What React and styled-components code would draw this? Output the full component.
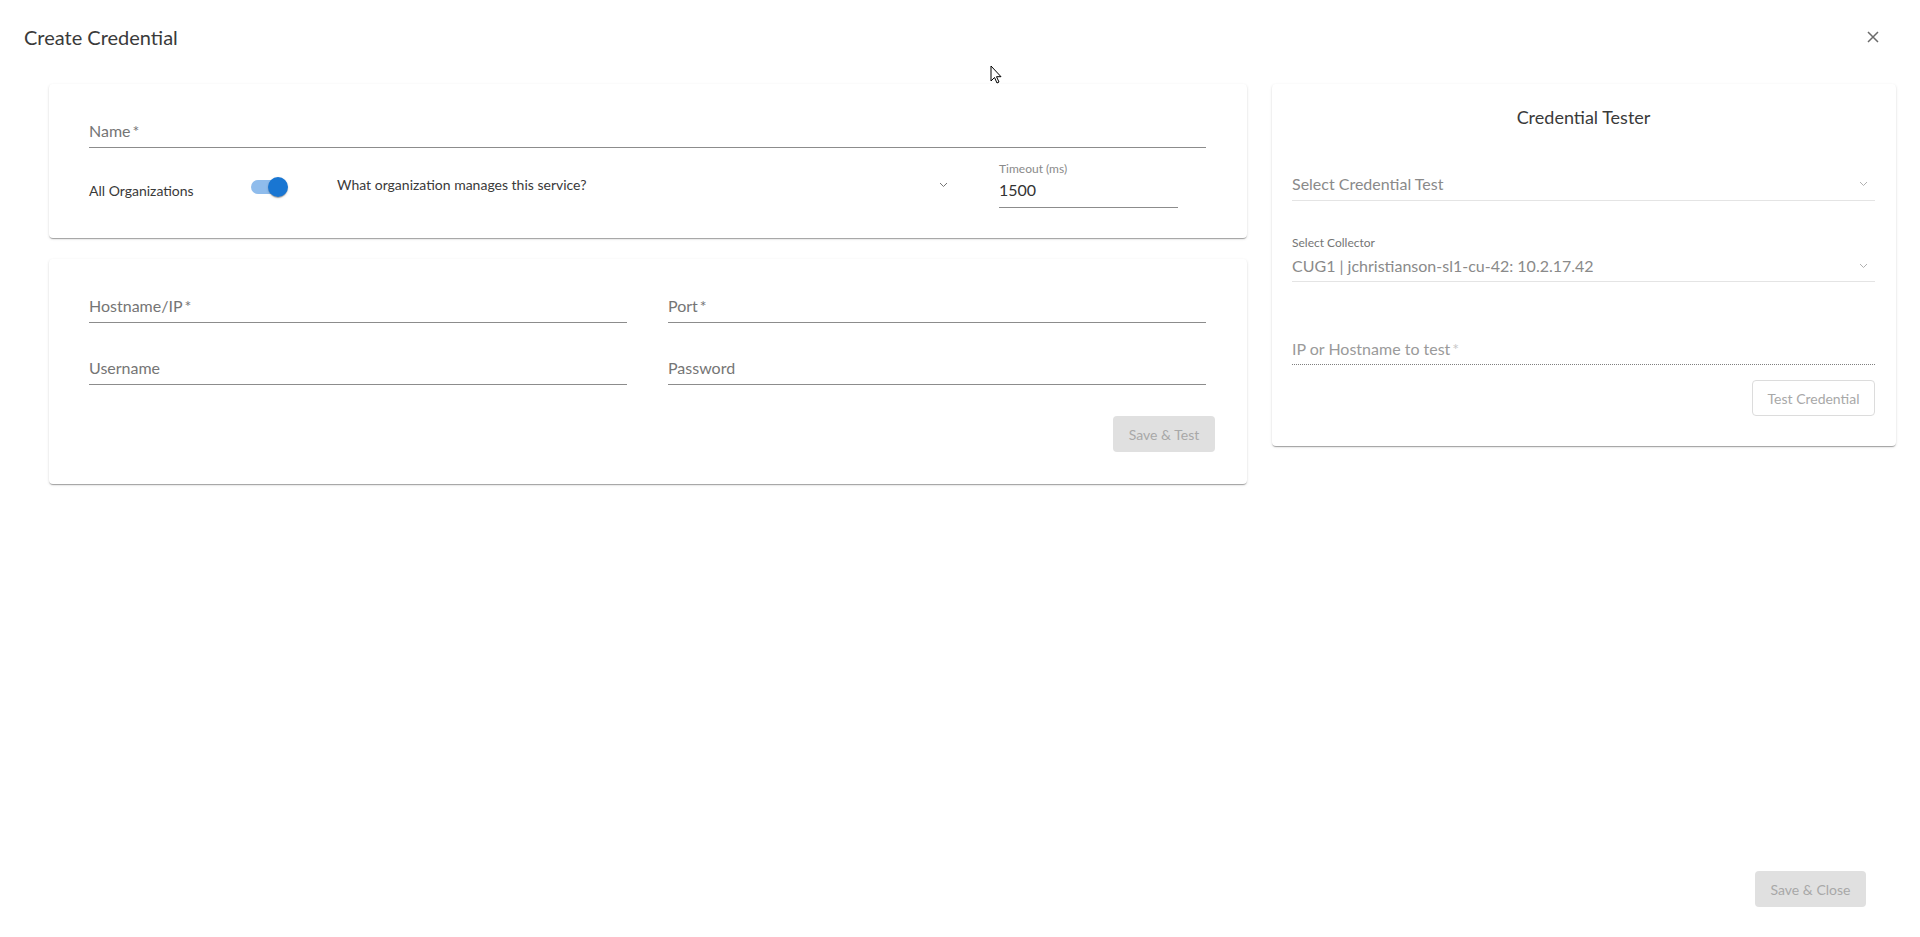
import React from 'react';
import styled, { createGlobalStyle } from 'styled-components';

const GlobalStyle = createGlobalStyle`
  html, body {
    margin: 0;
    padding: 0;
    background: #ffffff;
    font-family: Lato, "Noto Sans", sans-serif;
    color: #333333;
  }
  * {
    box-sizing: border-box;
  }
`;

const Page = styled.div`
  position: relative;
  display: flex;
  flex-direction: column;
  height: 100vh;
  min-height: 937px;
  background: #fff;
`;

const Header = styled.header`
  display: flex;
  align-items: center;
  justify-content: space-between;
  height: 74px;
  padding: 0 40px 0 24px;
`;

const Title = styled.h1`
  margin: 0;
  font-size: 20px;
  font-weight: 400;
  color: #3a3a3a;
`;

const CloseButton = styled.button`
  display: flex;
  align-items: center;
  justify-content: center;
  width: 14px;
  height: 14px;
  padding: 0;
  border: none;
  background: none;
  cursor: pointer;
`;

const Content = styled.main`
  flex: 1;
  display: grid;
  grid-template-columns: 1fr 624px;
  column-gap: 25px;
  align-items: start;
  padding: 10px 24px 0 49px;
`;

const Column = styled.div`
  display: flex;
  flex-direction: column;
  gap: 21px;
`;

const Card = styled.section`
  background: #fff;
  border-radius: 4px;
  box-shadow: 0 2px 1px -1px rgba(0, 0, 0, 0.2), 0 1px 1px 0 rgba(0, 0, 0, 0.14),
    0 1px 3px 0 rgba(0, 0, 0, 0.12);
  padding: ${(p) => p.$pad};
`;

const Field = styled.div`
  display: flex;
  flex-direction: column;
  width: ${(p) => p.$width || 'auto'};
  margin-top: ${(p) => p.$top || '0'};
  padding-bottom: ${(p) => p.$bottom || '4px'};
  border-bottom: 1px ${(p) => (p.$dotted ? 'dotted' : 'solid')} ${(p) => p.$line || 'rgba(0, 0, 0, 0.45)'};
`;

const SmallLabel = styled.span`
  font-size: 12px;
  line-height: 16px;
  color: ${(p) => p.$color || '#757575'};
  margin-bottom: ${(p) => p.$gap || '1px'};
`;

const FieldText = styled.span`
  font-size: 16px;
  line-height: 24px;
  color: ${(p) => p.$color || '#757575'};
  white-space: nowrap;
`;

const Star = styled.span`
  color: ${(p) => p.$color || 'inherit'};
  margin-left: 2px;
`;

const SelectRow = styled.div`
  display: flex;
  align-items: center;
  justify-content: space-between;
  padding-right: 7px;
`;

const OrgRow = styled.div`
  display: flex;
  align-items: center;
  margin-top: 13px;
`;

const OrgLabel = styled.span`
  width: 162px;
  margin-top: 12px;
  font-size: 14px;
  color: #3a3a3a;
`;

const Toggle = styled.span`
  position: relative;
  display: inline-block;
  width: 34px;
  height: 14px;
  margin-top: 4px;
  border-radius: 7px;
  background: #8fbcec;

  &::after {
    content: '';
    position: absolute;
    right: -3px;
    top: -3px;
    width: 20px;
    height: 20px;
    border-radius: 50%;
    background: #1976d2;
    box-shadow: 0 2px 1px -1px rgba(0, 0, 0, 0.2), 0 1px 1px 0 rgba(0, 0, 0, 0.14),
      0 1px 3px 0 rgba(0, 0, 0, 0.12);
  }
`;

const OrgSelect = styled.div`
  display: flex;
  align-items: center;
  justify-content: space-between;
  width: 618px;
  margin-left: 52px;
  padding-right: 7px;
  font-size: 14px;
  color: #3a3a3a;
`;

const TimeoutWrap = styled.div`
  margin-left: 44px;
`;

const FieldGrid = styled.div`
  display: grid;
  grid-template-columns: 1fr 1fr;
  column-gap: 41px;
  row-gap: 33px;
  margin-right: 9px;
`;

const Actions = styled.div`
  display: flex;
  justify-content: flex-end;
  margin: ${(p) => p.$margin};
`;

const FilledButton = styled.button`
  width: ${(p) => p.$width};
  height: 36px;
  border: none;
  border-radius: 4px;
  background: #e0e0e0;
  color: #a8a8a8;
  font-family: Lato, sans-serif;
  font-size: 14px;
`;

const OutlineButton = styled.button`
  width: 123px;
  height: 36px;
  border: 1px solid #dcdcdc;
  border-radius: 4px;
  background: #fff;
  color: #a8a8a8;
  font-family: Lato, sans-serif;
  font-size: 14px;
`;

const TesterTitle = styled.h2`
  margin: 0;
  text-align: center;
  font-size: 18px;
  line-height: 24px;
  font-weight: 400;
  color: #3a3a3a;
`;

const Footer = styled.footer`
  display: flex;
  justify-content: flex-end;
  padding: 0 54px 30px 0;
`;

const Pointer = styled.svg`
  position: absolute;
  left: 990px;
  top: 65px;
`;

const Chevron = ({ color = '#757575' }) => (
  <svg width="9" height="6" viewBox="0 0 9 6">
    <path d="M1 1l3.5 3.5L8 1" fill="none" stroke={color} strokeWidth="1" />
  </svg>
);

export default function App() {
  return (
    <Page>
      <GlobalStyle />
      <Header>
        <Title>Create Credential</Title>
        <CloseButton aria-label="close">
          <svg width="12" height="12" viewBox="0 0 12 12">
            <path d="M1 1l10 10M11 1L1 11" stroke="#6b6b6b" strokeWidth="1.5" />
          </svg>
        </CloseButton>
      </Header>

      <Content>
        <Column>
          <Card $pad="35px 41px 30px 40px">
            <Field>
              <FieldText>
                Name<Star>*</Star>
              </FieldText>
            </Field>
            <OrgRow>
              <OrgLabel>All Organizations</OrgLabel>
              <Toggle />
              <OrgSelect>
                <span>What organization manages this service?</span>
                <Chevron />
              </OrgSelect>
              <TimeoutWrap>
                <Field $width="179px" $bottom="5px">
                  <SmallLabel $color="#8a8a8a">Timeout (ms)</SmallLabel>
                  <FieldText $color="#333">1500</FieldText>
                </Field>
              </TimeoutWrap>
            </OrgRow>
          </Card>

          <Card $pad="35px 32px 32px 40px">
            <FieldGrid>
              <Field>
                <FieldText>
                  Hostname/IP<Star>*</Star>
                </FieldText>
              </Field>
              <Field>
                <FieldText>
                  Port<Star>*</Star>
                </FieldText>
              </Field>
              <Field>
                <FieldText>Username</FieldText>
              </Field>
              <Field>
                <FieldText>Password</FieldText>
              </Field>
            </FieldGrid>
            <Actions $margin="31px 0 0">
              <FilledButton $width="102px">Save &amp; Test</FilledButton>
            </Actions>
          </Card>
        </Column>

        <Card $pad="21px 21px 30px 20px">
          <TesterTitle>Credential Tester</TesterTitle>
          <Field $top="43px" $line="#e4e4e4">
            <SelectRow>
              <FieldText $color="#8a8a8a">Select Credential Test</FieldText>
              <Chevron color="#b0b0b0" />
            </SelectRow>
          </Field>
          <Field $top="34px" $line="#e4e4e4" $bottom="3px">
            <SmallLabel $gap="3px">Select Collector</SmallLabel>
            <SelectRow>
              <FieldText $color="#8a8a8a">CUG1 | jchristianson-sl1-cu-42: 10.2.17.42</FieldText>
              <Chevron color="#b0b0b0" />
            </SelectRow>
          </Field>
          <Field $top="55px" $dotted $line="rgba(0, 0, 0, 0.5)" $bottom="3px">
            <FieldText $color="#9a9a9a">
              IP or Hostname to test<Star $color="#c8c8c8">*</Star>
            </FieldText>
          </Field>
          <Actions $margin="15px 0 0">
            <OutlineButton>Test Credential</OutlineButton>
          </Actions>
        </Card>
      </Content>

      <Footer>
        <FilledButton $width="111px">Save &amp; Close</FilledButton>
      </Footer>

      <Pointer width="12" height="19" viewBox="0 0 12 19">
        <path d="M1 1v15l3.5-3.5 2.5 5.5 2-1-2.5-5.3H11z" fill="#fff" stroke="#000" strokeWidth="1" />
      </Pointer>
    </Page>
  );
}
